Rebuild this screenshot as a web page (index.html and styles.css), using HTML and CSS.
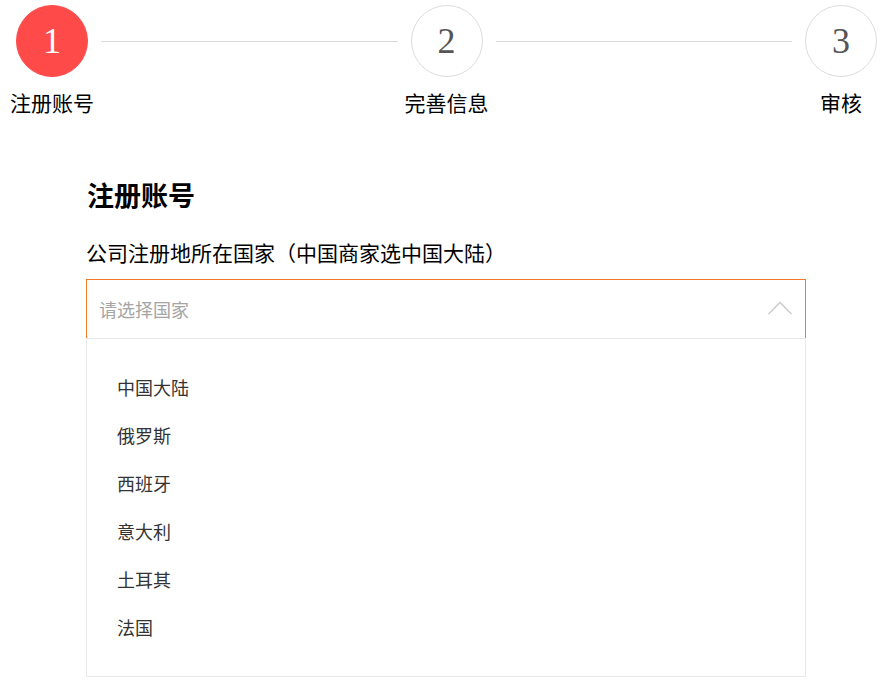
FILE: index.html
```html
<!DOCTYPE html>
<html lang="zh-CN">
<head>
<meta charset="utf-8">
<link rel="stylesheet" href="styles.css">
</head>
<body>
<div class="steps">
  <div class="step">
    <div class="circle active">1</div>
    <div class="step-label">注册账号</div>
  </div>
  <div class="line"></div>
  <div class="step">
    <div class="circle">2</div>
    <div class="step-label">完善信息</div>
  </div>
  <div class="line"></div>
  <div class="step">
    <div class="circle">3</div>
    <div class="step-label">审核</div>
  </div>
</div>

<div class="form">
  <h2 class="title">注册账号</h2>
  <div class="field-label">公司注册地所在国家（中国商家选中国大陆）</div>
  <div class="select">
    <span class="placeholder">请选择国家</span>
    <svg class="chevron" width="26" height="14" viewBox="0 0 26 14"><polyline points="1.5,13 13,1.5 24.5,13" fill="none" stroke="#cfcfcf" stroke-width="1.6"/></svg>
  </div>
  <ul class="dropdown">
    <li>中国大陆</li>
    <li>俄罗斯</li>
    <li>西班牙</li>
    <li>意大利</li>
    <li>土耳其</li>
    <li>法国</li>
  </ul>
</div>
</body>
</html>
```

FILE: styles.css
```css
* { box-sizing: border-box; }
body {
  margin: 0;
  background: #fff;
  font-family: "Noto Sans CJK SC", "Noto Sans", sans-serif;
  color: #000;
}
.steps {
  display: flex;
  align-items: flex-start;
  padding: 5px 18px 0 16px;
}
.step {
  width: 72px;
  flex: none;
  display: flex;
  flex-direction: column;
  align-items: center;
}
.circle {
  width: 72px;
  height: 72px;
  border-radius: 50%;
  border: 1px solid #dcdcdc;
  display: flex;
  align-items: center;
  justify-content: center;
  font-family: "Liberation Serif", "DejaVu Serif", serif;
  font-size: 36px;
  color: #555;
  line-height: 1;
}
.circle.active {
  background: #ff4a4a;
  border-color: #ff4a4a;
  color: #fff;
}
.step-label {
  margin-top: 11px;
  font-size: 21px;
  line-height: 28px;
  white-space: nowrap;
  color: #000;
}
.line {
  flex: 1;
  height: 1px;
  background: #d9d9d9;
  margin: 36px 13px 0;
}
.form {
  margin: 61px 0 0 86px;
  width: 720px;
}
.title {
  margin: 0;
  font-size: 27px;
  line-height: 36px;
  font-weight: 700;
  padding-left: 1px;
}
.field-label {
  margin-top: 25px;
  font-size: 21px;
  line-height: 28px;
  padding-left: 0;
}
.select {
  margin-top: 13px;
  height: 59px;
  border: 1px solid #f07a2a;
  border-bottom: none;
  display: flex;
  align-items: center;
  justify-content: space-between;
  padding: 0 12px 3px 12px;
}
.placeholder {
  font-size: 18px;
  color: #a5a5a5;
  margin-top: 3px;
}
.chevron { display: block; }
.dropdown {
  list-style: none;
  margin: 0;
  padding: 24px 0 25px;
  border: 1px solid #e8e8e8;
}
.dropdown li {
  height: 48px;
  line-height: 48px;
  padding-left: 30px;
  font-size: 18px;
  color: #333;
}
```
